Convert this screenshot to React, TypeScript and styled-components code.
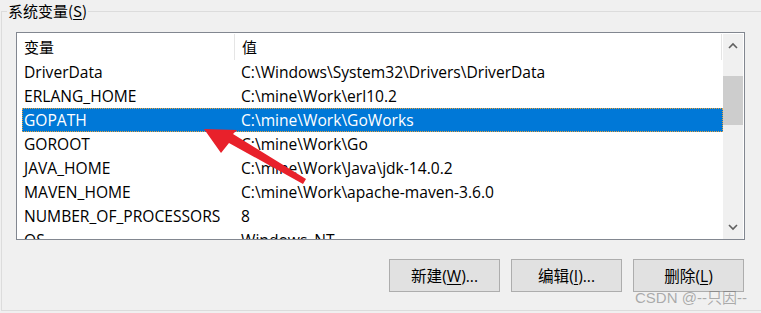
import styled, { createGlobalStyle } from "styled-components";

const GlobalStyle = createGlobalStyle`
  html, body {
    margin: 0;
    padding: 0;
    background: #f0f0f0;
  }
  body {
    font-family: "Open Sans", "Noto Sans CJK SC", sans-serif;
    font-size: 15.6px;
    color: #000;
  }
`;

const Screen = styled.div`
  position: relative;
  width: 761px;
  height: 313px;
  overflow: hidden;
  background: #f0f0f0;
`;

const GroupBox = styled.fieldset`
  box-sizing: border-box;
  width: 800px;
  height: 311px;
  margin: 0 0 0 1px;
  padding: 0;
  border: 1px solid #dcdcdc;
  min-width: 0;
`;

const Legend = styled.legend`
  margin-left: 5px;
  padding: 0 1px;
  line-height: 22px;
  font-family: "Noto Sans CJK SC", sans-serif;
  font-size: 15px;
`;

const Key = styled.span`
  text-decoration: underline;
  text-underline-offset: 2px;
`;

const ListView = styled.div`
  box-sizing: border-box;
  width: 729px;
  height: 208px;
  margin: 10px 0 0 14px;
  border: 1px solid #828790;
  background: #fff;
  display: flex;
  overflow: hidden;
`;

const ViewArea = styled.div`
  width: 706px;
  display: flex;
  flex-direction: column;
  overflow: hidden;
`;

const Header = styled.div`
  display: grid;
  grid-template-columns: 217px 1px 486px 1px;
  height: 27px;
  flex-shrink: 0;
`;

const HeaderCell = styled.div`
  padding-left: 7px;
  line-height: 27px;
  font-family: "Noto Sans CJK SC", sans-serif;
  font-size: 15px;
`;

const HeaderSep = styled.div`
  margin-top: 1px;
  background: #e5e5e5;
`;

const Row = styled.div<{ $selected?: boolean }>`
  box-sizing: border-box;
  display: grid;
  grid-template-columns: 212px 1fr;
  height: 24px;
  margin-left: 5px;
  line-height: 22px;
  white-space: nowrap;
  flex-shrink: 0;
  color: ${({ $selected }) => ($selected ? "#fff" : "#000")};
  background: ${({ $selected }) => ($selected ? "#0078d7" : "transparent")};
  border: 1px ${({ $selected }) => ($selected ? "dotted #e9a23b" : "solid transparent")};
`;

const NameCell = styled.div`
  padding-left: 1px;
`;

const ValueCell = styled.div`
  padding-left: 6px;
`;

const ScrollBar = styled.div`
  width: 20px;
  margin: 1px 1px 0 0;
  background: #f0f0f0;
  display: flex;
  flex-direction: column;
`;

const ScrollButton = styled.div`
  height: 23px;
  display: flex;
  align-items: center;
  justify-content: center;
  flex-shrink: 0;
`;

const Track = styled.div`
  flex: 1;
`;

const Thumb = styled.div<{ $offset: number; $size: number }>`
  margin-top: ${({ $offset }) => $offset}px;
  height: ${({ $size }) => $size}px;
  background: #cdcdcd;
`;

const ButtonRow = styled.div`
  width: 728px;
  margin: 19px 0 0 14px;
  display: flex;
  justify-content: flex-end;
  gap: 11px;
`;

const Button = styled.button`
  box-sizing: border-box;
  width: 111px;
  height: 33px;
  padding: 0;
  border: 1px solid #adadad;
  background: #e1e1e1;
  font-family: "Open Sans", "Noto Sans CJK SC", sans-serif;
  font-size: 15.6px;
  color: #000;
`;

const Watermark = styled.div`
  position: absolute;
  left: 635px;
  top: 286px;
  font-family: "Liberation Sans", "Noto Sans CJK SC", sans-serif;
  font-size: 15px;
  color: rgba(110, 110, 110, 0.55);
  white-space: nowrap;
`;

const Overlay = styled.svg`
  position: absolute;
  left: 0;
  top: 0;
  pointer-events: none;
`;

const rows = [
  ["DriverData", "C:\\Windows\\System32\\Drivers\\DriverData"],
  ["ERLANG_HOME", "C:\\mine\\Work\\erl10.2"],
  ["GOPATH", "C:\\mine\\Work\\GoWorks"],
  ["GOROOT", "C:\\mine\\Work\\Go"],
  ["JAVA_HOME", "C:\\mine\\Work\\Java\\jdk-14.0.2"],
  ["MAVEN_HOME", "C:\\mine\\Work\\apache-maven-3.6.0"],
  ["NUMBER_OF_PROCESSORS", "8"],
  ["OS", "Windows_NT"],
];

const Chevron = ({ up }: { up?: boolean }) => (
  <svg width="10" height="7" viewBox="0 0 10 7">
    <path
      d={up ? "M1 6 L5 2 L9 6" : "M1 1 L5 5 L9 1"}
      fill="none"
      stroke="#606060"
      strokeWidth="1.6"
    />
  </svg>
);

const App = () => {
  return (
    <Screen>
      <GlobalStyle />
      <GroupBox>
        <Legend>
          系统变量(<Key>S</Key>)
        </Legend>
        <ListView>
          <ViewArea>
            <Header>
              <HeaderCell>变量</HeaderCell>
              <HeaderSep />
              <HeaderCell>值</HeaderCell>
              <HeaderSep />
            </Header>
            {rows.map(([name, value]) => (
              <Row key={name} $selected={name === "GOPATH"}>
                <NameCell>{name}</NameCell>
                <ValueCell>{value}</ValueCell>
              </Row>
            ))}
          </ViewArea>
          <ScrollBar>
            <ScrollButton>
              <Chevron up />
            </ScrollButton>
            <Track>
              <Thumb $offset={19} $size={49} />
            </Track>
            <ScrollButton>
              <Chevron />
            </ScrollButton>
          </ScrollBar>
        </ListView>
        <ButtonRow>
          <Button>
            新建(<Key>W</Key>)...
          </Button>
          <Button>
            编辑(<Key>I</Key>)...
          </Button>
          <Button>
            删除(<Key>L</Key>)
          </Button>
        </ButtonRow>
      </GroupBox>
      <Watermark>CSDN @--只因--</Watermark>
      <Overlay width="761" height="313" viewBox="0 0 761 313">
        <polygon
          points="204,129 237,130 233,134 306,179 303,184 229,143 221,153"
          fill="#e8212b"
        />
      </Overlay>
    </Screen>
  );
};

export default App;
